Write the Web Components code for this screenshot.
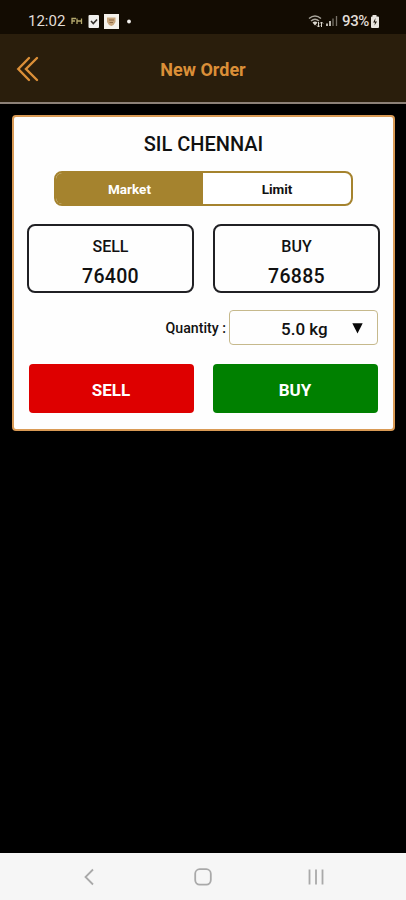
<!DOCTYPE html>
<html lang="en">
<head>
<meta charset="utf-8">
<title>New Order</title>
<style>
html,body{margin:0;height:100%;background:#000}
body{font-family:Roboto,"Liberation Sans",sans-serif;color:#111}
</style>
</head>
<body>
<order-app></order-app>
<script>
const define = (name, html) => {
  const t = document.createElement('template');
  t.innerHTML = html;
  customElements.define(name, class extends HTMLElement {
    constructor() {
      super();
      this.attachShadow({mode: 'open'}).append(t.content.cloneNode(true));
    }
  });
};

define('status-bar', `<style>
:host{display:flex;height:34px;background:#130c02;box-sizing:border-box;padding:7px 26px 0 28px;align-items:center;color:#e2ded8;font-size:15px;line-height:18px}
.n{margin-left:6px}.r{margin-left:auto}
svg{display:block}
.p{margin-left:3px;font-weight:500;font-size:15px;letter-spacing:-.4px}
</style>
<span>12:02</span>
<svg class="n" width="62" height="18" viewBox="0 0 62 18">
<path d="M1 12V6.500H5M1 9H4M6 12V6.500M6 9H10M10.500 12V6.500" fill="none" stroke="#b5a96e" stroke-width="1.300"/>
<rect x="17.500" y="3" width="10.500" height="13" rx="1" fill="#f0f0ee"/>
<path d="M20 9L22.300 11.500L26 7.500" fill="none" stroke="#33302c" stroke-width="1.600"/>
<rect x="33" y="2" width="15" height="15" fill="#f5f2ec"/>
<path d="M36 5.500H44.500V10Q43 13.500 40.300 14Q37.500 13.500 36 10Z" fill="#c9a77e"/>
<path d="M38 8H43M38.500 10.500H42" stroke="#8f6c48" fill="none"/>
<circle cx="58" cy="9.500" r="1.900" fill="#f2f0ec"/>
</svg>
<svg class="r" width="32" height="18" viewBox="0 0 32 18">
<g fill="none" stroke="#aaa69d" stroke-width="1.500"><path d="M2 6.500Q8 1.500 14 6.500"/><path d="M4 9Q8 5.500 12 9"/></g>
<path d="M5.500 10.500Q8 8.500 10.500 10.500L8 13.500Z" fill="#ddd9d0"/>
<path d="M11.500 10V15M10 13.500L11.500 15L13 13.500M14.500 15V10M13 11.500L14.500 10L16 11.500" fill="none" stroke="#ddd9d0"/>
<path d="M20 14V11.500M23 14V9" stroke="#d8d4cc" stroke-width="1.700"/><path d="M26 14V6.500M29.500 14V4" stroke="#79736a" stroke-width="1.300"/>
</svg>
<span class="p">93%</span>
<svg width="11" height="18" viewBox="0 0 11 18"><path d="M3.500 3H7.500V4.500H9Q10 4.500 10 5.500V15Q10 16 9 16H3Q2 16 2 15V5.500Q2 4.500 3 4.500H3.500Z" fill="#e8e5df"/><path d="M6.500 6L4.200 10.500H6L5.500 13.500L8 9.500H6Z" fill="#1b140a"/></svg>`);

define('app-header', `<style>
:host{display:grid;grid-template-columns:54px 1fr 54px;align-items:center;height:70px;box-sizing:border-box;background:#2a1e0c;border-bottom:2px solid #8c8178;color:#db8f38}
h1{margin:3px 0 0;font-size:18px;line-height:22px;font-weight:700;text-align:center}
svg{display:block;margin:2px 0 0 16px}
</style>
<svg width="24" height="26" viewBox="0 0 24 26" fill="none" stroke="currentColor" stroke-width="2.400" stroke-linecap="round"><path d="M13 2L2.300 13L13 24M21 2L10 13L21 24"/></svg>
<h1><slot></slot></h1>`);

define('segment-toggle', `<style>
:host{display:grid;grid-template-columns:147px 1fr;width:299px;height:35px;box-sizing:border-box;border:2px solid #a5832e;border-radius:8px;overflow:hidden;background:#fff;font-size:13.500px;font-weight:700;line-height:33px;text-align:center}
.a{background:#a5832e;color:#fff}
</style><div class="a"><slot name="on"></slot></div><div><slot name="off"></slot></div>`);

define('price-box', `<style>
:host{display:block;height:69px;box-sizing:border-box;border:2px solid #202024;border-radius:8px;text-align:center;font-weight:500;padding-top:11px}
.l{font-size:16px;line-height:20px}
.v{font-size:19.500px;line-height:24px;margin-top:8px;letter-spacing:.3px}
</style><div class="l"><slot name="label"></slot></div><div class="v"><slot></slot></div>`);

define('quantity-select', `<style>
:host{display:flex;justify-content:flex-end;align-items:center;gap:3px;font-weight:500}
.l{font-size:14.200px;line-height:18px;margin-top:1px}
.s{display:flex;align-items:center;width:149px;height:35px;box-sizing:border-box;border:1.500px solid #c6b98c;border-radius:4px;padding:2px 14px 0 51px;justify-content:space-between;font-size:17px}
</style><span class="l"><slot name="label"></slot></span><div class="s"><slot></slot><svg width="11" height="11" viewBox="0 0 11 11"><path d="M.3 .3H10.700L5.500 10.500Z" fill="#080808"/></svg></div>`);

define('action-button', `<style>
:host{display:flex;align-items:center;justify-content:center;height:49px;border-radius:4px;background:var(--fill);color:#fff;font-size:17px;font-weight:700;padding:3px 1px 0 0;box-sizing:border-box}
</style><slot></slot>`);

define('order-card', `<style>
:host{display:block;margin:11px 11px 0 12px;height:316px;box-sizing:border-box;border:2px solid #d99a55;border-radius:4px;background:#fefefe;padding:15px 13px 0}
h2{margin:0;font-size:20px;line-height:24px;font-weight:500;text-align:center}
segment-toggle{margin:15px 0 0 27px}
.prices,.actions{display:grid;grid-template-columns:167px 167px;gap:19px;margin-top:18px}
.prices{width:353px}
quantity-select{margin:17px 2px 0 0}
.actions{grid-template-columns:165px 165px;margin:19px 0 0 2px}
</style>
<h2>SIL CHENNAI</h2>
<segment-toggle><span slot="on">Market</span><span slot="off">Limit</span></segment-toggle>
<div class="prices"><price-box><span slot="label">SELL</span>76400</price-box><price-box><span slot="label">BUY</span>76885</price-box></div>
<quantity-select><span slot="label">Quantity :</span><span>5.0 kg</span></quantity-select>
<div class="actions"><action-button style="--fill:#de0000">SELL</action-button><action-button style="--fill:#008000">BUY</action-button></div>`);

define('nav-bar', `<style>
:host{display:flex;justify-content:space-between;align-items:center;height:47px;background:#f6f6f6;box-sizing:border-box;padding:1px 81px 0 80px}
svg{display:block}
</style>
<svg width="18" height="18" viewBox="0 0 18 18" fill="none" stroke="#a9a9a9" stroke-width="1.800"><path d="M13 1.500L5.500 9L13 16.500"/></svg>
<svg width="18" height="18" viewBox="0 0 18 18" fill="none" stroke="#a9a9a9" stroke-width="1.800"><rect x="1.200" y="1.200" width="15.600" height="15.400" rx="4.500"/></svg>
<svg width="18" height="18" viewBox="0 0 18 18" fill="none" stroke="#a9a9a9" stroke-width="1.800"><path d="M2.500 1.500V16.500M9 1.500V16.500M15.500 1.500V16.500"/></svg>`);

define('order-app', `<style>
:host{display:flex;flex-direction:column;width:406px;height:900px;background:#000;overflow:hidden}
nav-bar{margin-top:auto}
</style>
<status-bar></status-bar><app-header>New Order</app-header><order-card></order-card><nav-bar></nav-bar>`);
</script>
</body>
</html>
